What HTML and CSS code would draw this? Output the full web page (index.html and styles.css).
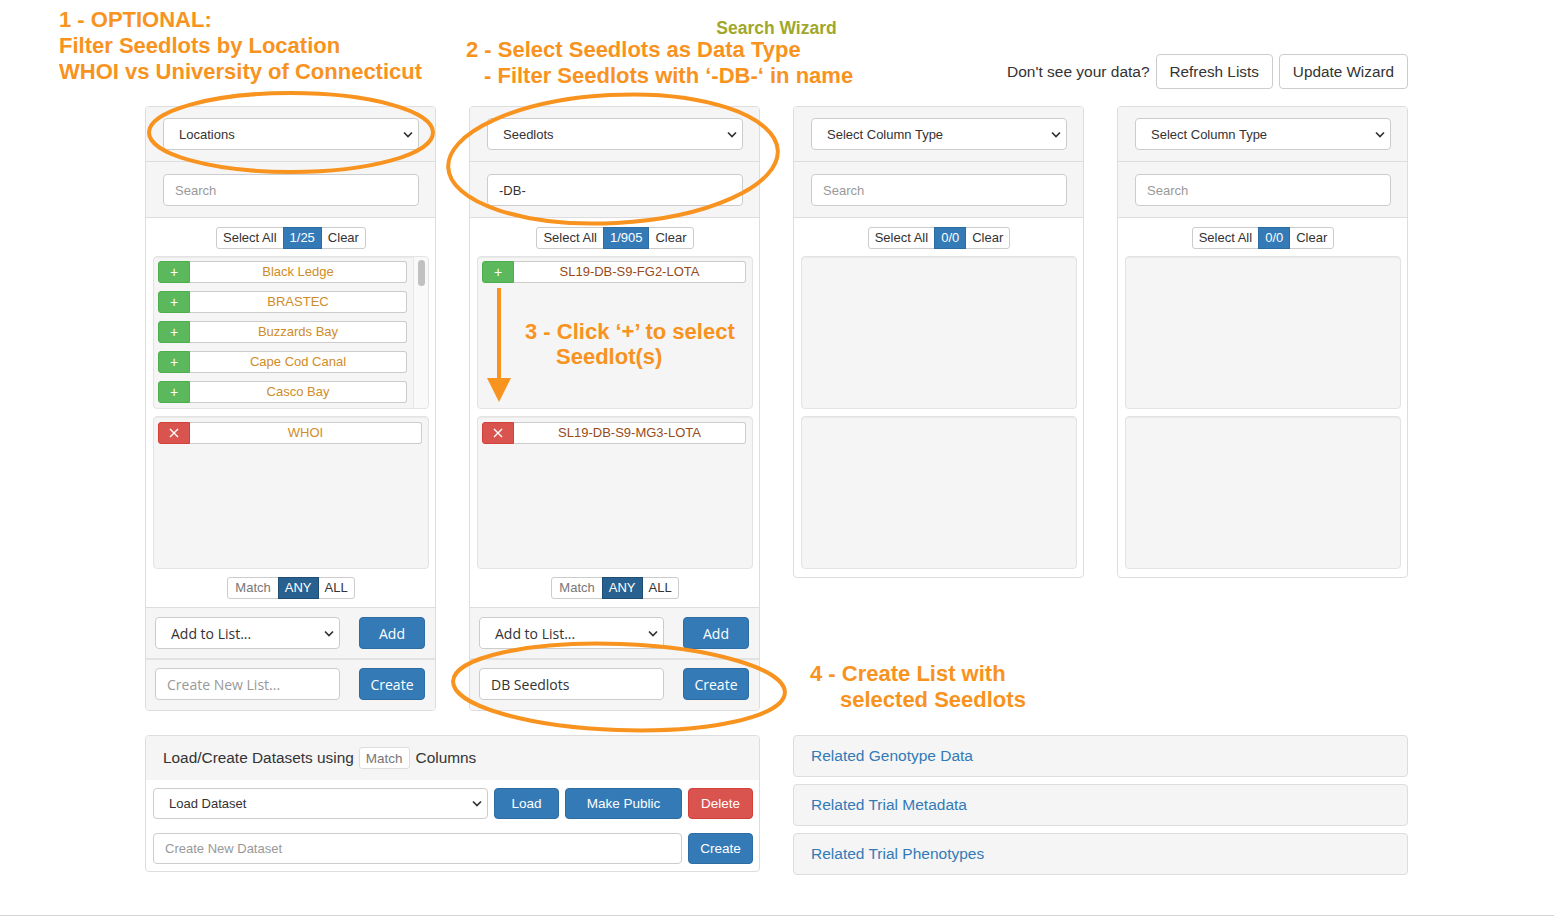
FILE: index.html
```html
<!DOCTYPE html>
<html lang="en">
<head>
<meta charset="utf-8">
<title>Search Wizard</title>
<link rel="stylesheet" href="styles.css">
</head>
<body>
<div class="page">
  <header class="wizard-head">
    <h1 class="wizard-title">Search Wizard</h1>
    <div class="toolbar">
      <span class="toolbar-text">Don't see your data?</span>
      <button class="btn btn-lg">Refresh Lists</button>
      <button class="btn btn-lg">Update Wizard</button>
    </div>
  </header>

  <div class="columns">
    <!-- Column 1 -->
    <section class="panel">
      <div class="sec sec-select">
        <div class="select"><span>Locations</span><svg class="chev" width="10" height="7" viewBox="0 0 10 7"><path d="M1 1.5l4 4 4-4" fill="none" stroke="#333" stroke-width="1.7"/></svg></div>
      </div>
      <div class="sec sec-search">
        <input class="input" type="text" placeholder="Search">
      </div>
      <div class="panel-body">
        <div class="btn-group">
          <button class="seg">Select All</button><button class="seg seg-primary">1/25</button><button class="seg">Clear</button>
        </div>
        <div class="well well-scroll">
          <div class="items">
            <div class="item"><span class="item-btn add">+</span><span class="item-label loc">Black Ledge</span></div>
            <div class="item"><span class="item-btn add">+</span><span class="item-label loc">BRASTEC</span></div>
            <div class="item"><span class="item-btn add">+</span><span class="item-label loc">Buzzards Bay</span></div>
            <div class="item"><span class="item-btn add">+</span><span class="item-label loc">Cape Cod Canal</span></div>
            <div class="item"><span class="item-btn add">+</span><span class="item-label loc">Casco Bay</span></div>
          </div>
          <div class="scrollbar"><div class="thumb"></div></div>
        </div>
        <div class="well well-second">
          <div class="items">
            <div class="item"><span class="item-btn remove"><svg width="10" height="10" viewBox="0 0 10 10"><path d="M1 1l8 8M9 1l-8 8" stroke="#fff" stroke-width="1.4"/></svg></span><span class="item-label loc">WHOI</span></div>
          </div>
        </div>
        <div class="btn-group match">
          <button class="seg seg-muted">Match</button><button class="seg seg-active">ANY</button><button class="seg">ALL</button>
        </div>
      </div>
      <div class="sec sec-add">
        <div class="select select-os"><span>Add to List...</span><svg class="chev" width="10" height="7" viewBox="0 0 10 7"><path d="M1 1.5l4 4 4-4" fill="none" stroke="#333" stroke-width="1.7"/></svg></div>
        <button class="btn btn-primary btn-side">Add</button>
      </div>
      <div class="sec sec-create">
        <input class="input input-os" type="text" placeholder="Create New List...">
        <button class="btn btn-primary btn-side">Create</button>
      </div>
    </section>

    <!-- Column 2 -->
    <section class="panel">
      <div class="sec sec-select">
        <div class="select"><span>Seedlots</span><svg class="chev" width="10" height="7" viewBox="0 0 10 7"><path d="M1 1.5l4 4 4-4" fill="none" stroke="#333" stroke-width="1.7"/></svg></div>
      </div>
      <div class="sec sec-search">
        <input class="input" type="text" value="-DB-">
      </div>
      <div class="panel-body">
        <div class="btn-group">
          <button class="seg">Select All</button><button class="seg seg-primary">1/905</button><button class="seg">Clear</button>
        </div>
        <div class="well">
          <div class="items">
            <div class="item"><span class="item-btn add">+</span><span class="item-label lot">SL19-DB-S9-FG2-LOTA</span></div>
          </div>
        </div>
        <div class="well well-second">
          <div class="items">
            <div class="item"><span class="item-btn remove"><svg width="10" height="10" viewBox="0 0 10 10"><path d="M1 1l8 8M9 1l-8 8" stroke="#fff" stroke-width="1.4"/></svg></span><span class="item-label lot">SL19-DB-S9-MG3-LOTA</span></div>
          </div>
        </div>
        <div class="btn-group match">
          <button class="seg seg-muted">Match</button><button class="seg seg-active">ANY</button><button class="seg">ALL</button>
        </div>
      </div>
      <div class="sec sec-add">
        <div class="select select-os"><span>Add to List...</span><svg class="chev" width="10" height="7" viewBox="0 0 10 7"><path d="M1 1.5l4 4 4-4" fill="none" stroke="#333" stroke-width="1.7"/></svg></div>
        <button class="btn btn-primary btn-side">Add</button>
      </div>
      <div class="sec sec-create">
        <input class="input input-os" type="text" value="DB Seedlots">
        <button class="btn btn-primary btn-side">Create</button>
      </div>
    </section>

    <!-- Column 3 -->
    <section class="panel">
      <div class="sec sec-select">
        <div class="select"><span>Select Column Type</span><svg class="chev" width="10" height="7" viewBox="0 0 10 7"><path d="M1 1.5l4 4 4-4" fill="none" stroke="#333" stroke-width="1.7"/></svg></div>
      </div>
      <div class="sec sec-search">
        <input class="input" type="text" placeholder="Search">
      </div>
      <div class="panel-body">
        <div class="btn-group">
          <button class="seg">Select All</button><button class="seg seg-primary">0/0</button><button class="seg">Clear</button>
        </div>
        <div class="well"></div>
        <div class="well well-second"></div>
      </div>
    </section>

    <!-- Column 4 -->
    <section class="panel">
      <div class="sec sec-select">
        <div class="select"><span>Select Column Type</span><svg class="chev" width="10" height="7" viewBox="0 0 10 7"><path d="M1 1.5l4 4 4-4" fill="none" stroke="#333" stroke-width="1.7"/></svg></div>
      </div>
      <div class="sec sec-search">
        <input class="input" type="text" placeholder="Search">
      </div>
      <div class="panel-body">
        <div class="btn-group">
          <button class="seg">Select All</button><button class="seg seg-primary">0/0</button><button class="seg">Clear</button>
        </div>
        <div class="well"></div>
        <div class="well well-second"></div>
      </div>
    </section>
  </div>

  <div class="bottom-row">
    <section class="dataset-panel">
      <div class="dataset-head">
        <span>Load/Create Datasets using</span>
        <span class="match-box">Match</span>
        <span>Columns</span>
      </div>
      <div class="dataset-body">
        <div class="dataset-row">
          <div class="select select-ds"><span>Load Dataset</span><svg class="chev" width="10" height="7" viewBox="0 0 10 7"><path d="M1 1.5l4 4 4-4" fill="none" stroke="#333" stroke-width="1.7"/></svg></div>
          <button class="btn btn-primary btn-ds w65">Load</button>
          <button class="btn btn-primary btn-ds w117">Make Public</button>
          <button class="btn btn-danger btn-ds w65">Delete</button>
        </div>
        <div class="dataset-row">
          <input class="input input-ds" type="text" placeholder="Create New Dataset">
          <button class="btn btn-primary btn-ds w65">Create</button>
        </div>
      </div>
    </section>

    <div class="related">
      <div class="related-item">Related Genotype Data</div>
      <div class="related-item">Related Trial Metadata</div>
      <div class="related-item">Related Trial Phenotypes</div>
    </div>
  </div>
</div>
<footer class="site-footer"></footer>

<div class="overlay">
  <svg class="marks" width="1554" height="918" viewBox="0 0 1554 918">
    <ellipse cx="291" cy="132.5" rx="142" ry="39.5" fill="none" stroke="#f7931e" stroke-width="4"/>
    <ellipse cx="613" cy="159" rx="165" ry="64" transform="rotate(-3 613 159)" fill="none" stroke="#f7931e" stroke-width="4"/>
    <ellipse cx="619" cy="687" rx="166" ry="43" transform="rotate(2 619 687)" fill="none" stroke="#f7931e" stroke-width="4"/>
    <line x1="499" y1="288" x2="499" y2="382" stroke="#f7931e" stroke-width="4"/>
    <polygon points="487,378 511,378 499,402" fill="#f7931e"/>
  </svg>
  <div class="note note-1">1 - OPTIONAL:<br>Filter Seedlots by Location<br>WHOI vs University of Connecticut</div>
  <div class="note note-2">2 - Select Seedlots as Data Type<span class="indent-2">- Filter Seedlots with ‘-DB-‘ in name</span></div>
  <div class="note note-3">3 - Click ‘+’ to select<span class="indent-3">Seedlot(s)</span></div>
  <div class="note note-4">4 - Create List with<span class="indent-4">selected Seedlots</span></div>
</div>
</body>
</html>
```

FILE: styles.css
```css
* { box-sizing: border-box; }

html, body {
  margin: 0;
  padding: 0;
}

body {
  position: relative;
  height: 918px;
  overflow: hidden;
  background: #fff;
  color: #333;
  font-family: "Liberation Sans", Arial, sans-serif;
  font-size: 13px;
}

.page {
  width: 1263px;
  margin-left: 145px;
}

/* ---------- header ---------- */
.wizard-head {
  padding-top: 17px;
  margin-bottom: 17px;
}

.wizard-title {
  margin: 0;
  text-align: center;
  font-size: 17.5px;
  line-height: 22px;
  font-weight: bold;
  color: #9fa82a;
}

.toolbar {
  display: flex;
  justify-content: flex-end;
  align-items: center;
  gap: 6px;
  margin-top: 15px;
  height: 35px;
}

.toolbar-text {
  font-size: 15.5px;
  color: #333;
}

.btn {
  display: inline-flex;
  align-items: center;
  justify-content: center;
  margin: 0;
  padding: 0;
  border: 1px solid transparent;
  border-radius: 4px;
  font-family: "Liberation Sans", Arial, sans-serif;
  cursor: pointer;
}

.btn-lg {
  height: 35px;
  padding: 0 13px;
  font-size: 15.3px;
  background: #fff;
  border-color: #ccc;
  color: #333;
}

.btn-primary {
  background: #337ab7;
  border-color: #2e6da4;
  color: #fff;
}

.btn-danger {
  background: #d9534f;
  border-color: #d43f3a;
  color: #fff;
}

/* ---------- four columns ---------- */
.columns {
  display: grid;
  grid-template-columns: repeat(4, 1fr);
  column-gap: 33px;
  align-items: start;
}

.panel {
  border: 1px solid #ddd;
  border-radius: 4px;
  background: #fff;
  overflow: hidden;
}

.sec {
  background: #f5f5f5;
}

.sec-select {
  padding: 11px 16px 11px 17px;
  border-bottom: 1px solid #ddd;
}

.sec-search {
  padding: 12px 16px 11px 17px;
  border-bottom: 1px solid #ddd;
}

.select {
  display: flex;
  align-items: center;
  justify-content: space-between;
  height: 32px;
  padding: 0 5px 0 15px;
  background: #fff;
  border: 1px solid #ccc;
  border-radius: 4px;
  font-size: 13px;
  color: #333;
}

.chev { flex: none; }

.input {
  display: block;
  width: 100%;
  height: 32px;
  margin: 0;
  padding: 0 11px;
  background: #fff;
  border: 1px solid #ccc;
  border-radius: 4px;
  font-family: "Liberation Sans", Arial, sans-serif;
  font-size: 13px;
  color: #333;
  outline: none;
}

.input::placeholder { color: #999; }

.panel-body {
  display: flex;
  flex-direction: column;
  align-items: center;
  padding: 9px 6px 8px 7px;
}

.btn-group {
  display: inline-flex;
  height: 22px;
}

.seg {
  height: 22px;
  margin: 0 0 0 -1px;
  padding: 0 6px;
  background: #fff;
  border: 1px solid #ccc;
  font-family: "Liberation Sans", Arial, sans-serif;
  font-size: 13px;
  color: #333;
  line-height: 20px;
}

.seg:first-child { margin-left: 0; border-radius: 3px 0 0 3px; }
.seg:last-child { border-radius: 0 3px 3px 0; }

.seg-primary {
  background: #337ab7;
  border-color: #2e6da4;
  color: #fff;
  position: relative;
}

.seg-active {
  background: #286090;
  border-color: #204d74;
  color: #fff;
  position: relative;
}

.seg-muted {
  color: #777;
  padding: 0 7px;
}

.well {
  align-self: stretch;
  height: 153px;
  margin-top: 7px;
  background: #f5f5f5;
  border: 1px solid #e3e3e3;
  border-radius: 4px;
  box-shadow: inset 0 1px 1px rgba(0, 0, 0, 0.05);
}

.well-second { margin-top: 7px; }

.match { margin-top: 8px; }

.items {
  display: flex;
  flex-direction: column;
  gap: 8px;
  padding: 4px 6px 4px 4px;
}

.well-second .items { padding-top: 5px; }

.well-scroll {
  display: flex;
  overflow: hidden;
}

.well-scroll .items { flex: 1; }

.scrollbar {
  width: 15px;
  flex: none;
  padding: 3px 3px 0 4px;
  background: #f9f9f9;
  border-left: 1px solid #e6e6e6;
}

.thumb {
  width: 7px;
  height: 26px;
  border-radius: 4px;
  background: #c1c1c1;
}

.item {
  display: flex;
  height: 22px;
}

.item-btn {
  display: flex;
  align-items: center;
  justify-content: center;
  width: 32px;
  flex: none;
  border-radius: 3px 0 0 3px;
  color: #fff;
  font-size: 14px;
}

.item-btn.add {
  background: #5cb85c;
  border: 1px solid #4cae4c;
}

.item-btn.remove {
  background: #d9534f;
  border: 1px solid #d43f3a;
}

.item-label {
  flex: 1;
  background: #fff;
  border: 1px solid #ccc;
  border-left: none;
  border-radius: 0 3px 3px 0;
  text-align: center;
  line-height: 20px;
  font-size: 13px;
}

.item-label.loc { color: #d08c28; }
.item-label.lot { color: #964b19; }

.sec-add {
  display: flex;
  gap: 19px;
  padding: 9px 10px 9px 9px;
  border-top: 1px solid #ddd;
}

.sec-create {
  display: flex;
  gap: 19px;
  padding: 8px 10px 10px 9px;
  border-top: 2px solid #e2e2e2;
}

.select-os,
.input-os {
  flex: 1;
  font-family: "Open Sans", "Liberation Sans", sans-serif;
  font-size: 14px;
}

.input-os { padding: 0 11px; }

.btn-side {
  width: 66px;
  height: 32px;
  flex: none;
  font-family: "Open Sans", "Liberation Sans", sans-serif;
  font-size: 14px;
}

/* ---------- bottom row ---------- */
.bottom-row {
  display: grid;
  grid-template-columns: 1fr 1fr;
  column-gap: 33px;
  align-items: start;
  margin-top: 24px;
}

.dataset-panel {
  border: 1px solid #ddd;
  border-radius: 4px;
  overflow: hidden;
  background: #fff;
}

.dataset-head {
  display: flex;
  align-items: center;
  gap: 5px;
  height: 44px;
  padding: 0 17px;
  background: #f5f5f5;
  font-size: 15.4px;
  color: #333;
}

.match-box {
  display: inline-flex;
  align-items: center;
  height: 22px;
  margin-right: 1px;
  padding: 0 6px;
  background: #fff;
  border: 1px solid #ddd;
  border-radius: 3px;
  font-size: 13.5px;
  color: #777;
}

.dataset-body {
  display: flex;
  flex-direction: column;
  gap: 14px;
  padding: 8px 6px 7px 7px;
}

.dataset-row {
  display: flex;
  gap: 6px;
  height: 31px;
}

.select-ds {
  flex: 1;
  height: 31px;
  padding-left: 15px;
}

.input-ds {
  flex: 1;
  height: 31px;
}

.btn-ds {
  height: 31px;
  flex: none;
  font-size: 13.5px;
}

.w65 { width: 65px; }
.w117 { width: 117px; }

.related {
  display: flex;
  flex-direction: column;
  gap: 7px;
}

.related-item {
  display: flex;
  align-items: center;
  height: 42px;
  padding: 0 17px;
  background: #f5f5f5;
  border: 1px solid #ddd;
  border-radius: 4px;
  font-size: 15.5px;
  color: #337ab7;
}

.site-footer {
  margin-top: 40px;
  border-top: 1px solid #d5d5d5;
}

/* ---------- annotation overlay ---------- */
.overlay {
  position: absolute;
  top: 0;
  left: 0;
  width: 1554px;
  height: 918px;
  pointer-events: none;
}

.marks {
  position: absolute;
  top: 0;
  left: 0;
}

.note {
  position: absolute;
  color: #f7931e;
  font-weight: bold;
  font-size: 22px;
  line-height: 26px;
  white-space: nowrap;
}

.note span { display: block; }

.note-1 { left: 59px; top: 7px; }
.note-2 { left: 466px; top: 37px; }
.indent-2 { margin-left: 18px; }
.note-3 { left: 525px; top: 319px; line-height: 25px; }
.indent-3 { margin-left: 31px; }
.note-4 { left: 810px; top: 661px; }
.indent-4 { margin-left: 30px; }
```
